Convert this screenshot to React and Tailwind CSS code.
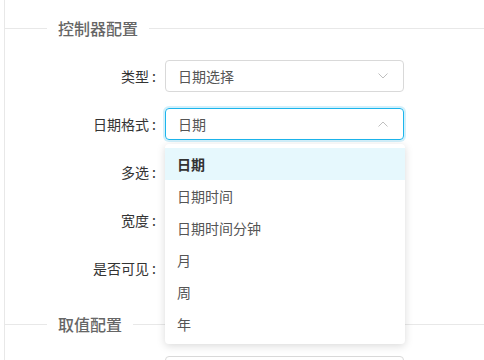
import React from "react";

const font = { fontFamily: '"Noto Sans CJK SC", "Noto Sans", sans-serif' };

function Divider({ title }) {
    return (
        <div className="flex items-center h-6">
            <div className="w-[42px] border-t border-[#e8e8e8]" />
            <span className="px-[11px] text-[16px] font-medium text-[#666] leading-6">
                {title}
            </span>
            <div className="flex-1 border-t border-[#e8e8e8]" />
        </div>
    );
}

function ChevronDown() {
    return (
        <svg width="10" height="6" viewBox="0 0 10 6" fill="none">
            <path d="M0.5 0.5L5 5L9.5 0.5" stroke="#bfbfbf" strokeWidth="1" />
        </svg>
    );
}

function ChevronUp() {
    return (
        <svg width="10" height="6" viewBox="0 0 10 6" fill="none">
            <path d="M0.5 5.5L5 1L9.5 5.5" stroke="#bfbfbf" strokeWidth="1" />
        </svg>
    );
}

function Row({ label, children }) {
    return (
        <div className="flex items-center h-8">
            <label className="w-[160px] text-right text-[14px] text-[#333]">
                {label}
                <span className="ml-[3px] mr-[9px]">:</span>
            </label>
            {children}
        </div>
    );
}

function App() {
    const options = ["日期", "日期时间", "日期时间分钟", "月", "周", "年"];

    return (
        <div className="w-[484px] h-[360px] overflow-hidden bg-white" style={font}>
            <div className="ml-[4px] h-full border-l border-[#e8e8e8] pt-4">
                <Divider title="控制器配置" />
                <div className="mt-5 flex flex-col gap-4">
                    <Row label="类型">
                        <div className="w-[239px] h-8 border border-[#d9d9d9] rounded-[4px] flex items-center justify-between pl-3 pr-[15px] text-[14px] text-[#555]">
                            <span>日期选择</span>
                            <ChevronDown />
                        </div>
                    </Row>
                    <Row label="日期格式">
                        <div className="relative">
                            <div className="w-[239px] h-8 border border-[#1cb5ec] rounded-[4px] ring-2 ring-[#1cb5ec]/20 flex items-center justify-between pl-3 pr-[15px] text-[14px] text-[#555]">
                                <span>日期</span>
                                <ChevronUp />
                            </div>
                            <div className="absolute z-10 left-0 top-[36px] w-[240px] bg-white rounded-[4px] py-1 shadow-[0_2px_8px_rgba(0,0,0,0.15)]">
                                {options.map((opt, i) => (
                                    <div
                                        key={opt}
                                        className={
                                            i === 0
                                                ? "h-8 flex items-center px-3 text-[14px] bg-[#e6f8fd] text-[#333] font-semibold"
                                                : "h-8 flex items-center px-3 text-[14px] text-[#555]"
                                        }
                                    >
                                        {opt}
                                    </div>
                                ))}
                            </div>
                        </div>
                    </Row>
                    <Row label="多选">
                        <div className="w-[239px] h-8" />
                    </Row>
                    <Row label="宽度">
                        <div className="w-[239px] h-8" />
                    </Row>
                    <Row label="是否可见">
                        <div className="w-[239px] h-8" />
                    </Row>
                </div>
                <div className="mt-7">
                    <Divider title="取值配置" />
                </div>
                <div className="mt-5 flex">
                    <div className="w-[160px]" />
                    <div className="w-[239px] h-8 border border-[#d9d9d9] rounded-[4px]" />
                </div>
            </div>
        </div>
    );
}

export default App;
